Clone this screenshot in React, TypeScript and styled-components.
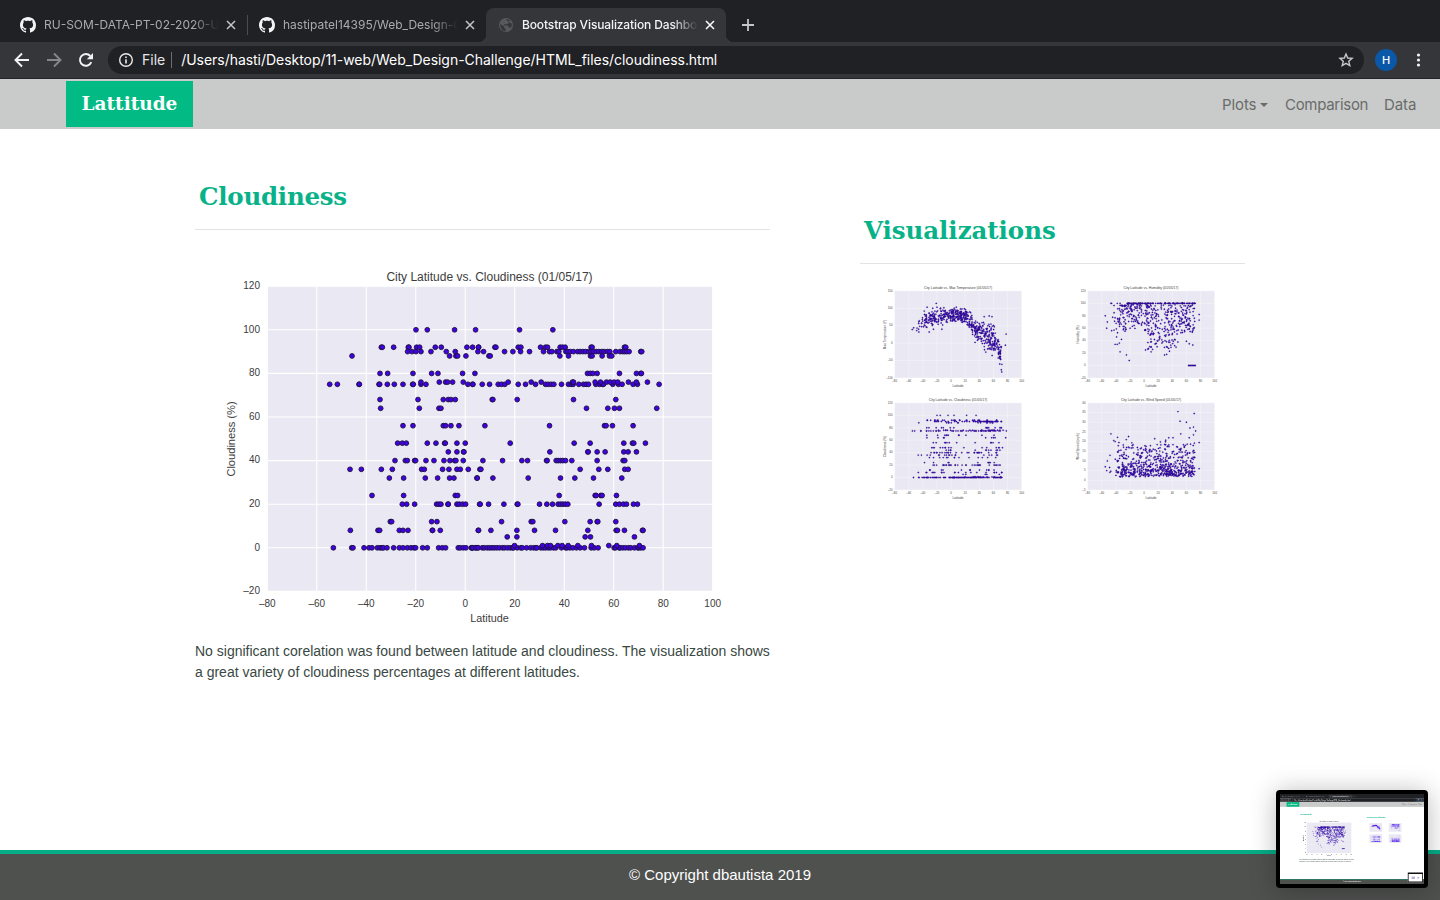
import React from "react";
import styled, { createGlobalStyle } from "styled-components";

const Global = createGlobalStyle`
  * { box-sizing: border-box; }
  html, body { margin: 0; padding: 0; background: #fff; overflow: hidden; }
`;

const UI = `Inter, "Liberation Sans", sans-serif`;
const SANS = `"Liberation Sans", Arial, sans-serif`;
const SERIF = `Georgia, "DejaVu Serif", serif`;

/* ---------- browser frame ---------- */

const Screen = styled.div`
  position: relative;
  display: flex;
  flex-direction: column;
  width: 1440px;
  height: 900px;
  overflow: hidden;
  background: #fff;
`;

const TabStrip = styled.div`
  display: flex;
  align-items: flex-end;
  height: 42px;
  padding-left: 8px;
  background: #202124;
`;

const Tab = styled.div<{ $active?: boolean; $width: number; $divider?: boolean }>`
  position: relative;
  display: flex;
  align-items: center;
  width: ${(p) => p.$width}px;
  height: 34px;
  padding: 0 11px 0 12px;
  border-radius: 8px 8px 0 0;
  background: ${(p) => (p.$active ? "#35363a" : "transparent")};
  color: ${(p) => (p.$active ? "#f1f3f4" : "#a8abb0")};
  font: ${(p) => (p.$active ? 500 : 400)} 12px/16px ${UI};
  ${(p) =>
    p.$divider &&
    `&::after { content: ""; position: absolute; right: -1px; top: 7px; width: 1px; height: 20px; background: #4a4c50; }`}
  ${(p) =>
    p.$active &&
    `&::before, &::after { content: ""; position: absolute; bottom: 0; width: 8px; height: 8px; }
     &::before { left: -8px; background: radial-gradient(circle at 0 0, transparent 8px, #35363a 8.5px); }
     &::after { right: -8px; background: radial-gradient(circle at 100% 0, transparent 8px, #35363a 8.5px); }`}
`;

const TabTitle = styled.span<{ $spacing: number }>`
  flex: 1;
  margin: 0 7px 0 8px;
  overflow: hidden;
  white-space: nowrap;
  letter-spacing: ${(p) => p.$spacing}px;
  mask-image: linear-gradient(to right, #000 calc(100% - 26px), transparent);
`;

const NewTab = styled.div`
  display: flex;
  align-items: center;
  height: 34px;
  margin-left: 15px;
`;

const Toolbar = styled.div`
  display: flex;
  align-items: center;
  height: 37px;
  padding: 0 10px 1px 14px;
  background: #35363a;
  border-bottom: 1px solid #232427;
`;

const NavButtons = styled.div`
  display: flex;
  gap: 16px;
  margin-right: 14px;
`;

const Omnibox = styled.div`
  display: flex;
  align-items: center;
  width: 1256px;
  height: 28px;
  padding: 0 10px;
  border-radius: 14px;
  background: #202124;
  color: #fff;
  font: 400 14px/20px ${UI};
`;

const Scheme = styled.span`
  margin: 0 6px 0 8px;
  color: #e4e6e9;
`;

const SchemeRule = styled.span`
  width: 1px;
  height: 16px;
  margin-right: 9px;
  background: #6b6d71;
`;

const Url = styled.span`
  flex: 1;
  white-space: nowrap;
  letter-spacing: -0.04px;
`;

const Profile = styled.div`
  display: flex;
  align-items: center;
  justify-content: center;
  width: 22px;
  height: 22px;
  margin: 0 13px 0 11px;
  border-radius: 50%;
  background: #0b57a8;
  color: #fff;
  font: 500 11px/22px ${UI};
`;

/* ---------- page ---------- */

const NavBar = styled.nav`
  display: flex;
  align-items: center;
  justify-content: space-between;
  height: 50px;
  padding: 0 24px 0 66px;
  background: #c9cbca;
`;

const Brand = styled.a`
  width: 127px;
  height: 46px;
  background: #02ba83;
  color: #fff;
  font: bold 18.5px/46px ${SERIF};
  text-align: center;
`;

const Menu = styled.div`
  display: flex;
  gap: 16px;
  color: #6a6c6b;
  font: 400 15px/24px ${UI};
`;

const MenuItem = styled.a<{ $width: number }>`
  display: flex;
  align-items: center;
  width: ${(p) => p.$width}px;
  padding-top: 1px;
  white-space: nowrap;
  letter-spacing: ${(p) => (p.$width > 80 ? -0.3 : -0.1)}px;
`;

const Caret = styled.span`
  margin-left: 4px;
  border: 4.8px solid transparent;
  border-top-color: currentColor;
  border-bottom: 0;
`;

const Main = styled.main`
  display: flex;
  flex: 1;
  gap: 90px;
  padding-left: 195px;
`;

const Article = styled.section`
  width: 575px;
  padding-top: 49px;
`;

const Aside = styled.aside`
  width: 385px;
  padding-top: 83px;
`;

const Heading = styled.h2<{ $spacing: number }>`
  height: 52px;
  margin: 0;
  padding-left: 4px;
  border-bottom: 1px solid #e3e3e3;
  color: #08b289;
  font: bold 24.5px/38px ${SERIF};
  letter-spacing: ${(p) => p.$spacing}px;
`;

const MainPlot = styled.div`
  height: 370px;
  margin-top: 32px;
`;

const Body = styled.p`
  margin: 9px 0 0;
  color: #3a4843;
  font: 14px/21px ${SANS};
  white-space: nowrap;
`;

const PlotGrid = styled.div`
  display: grid;
  grid-template-columns: 1fr 1fr;
  grid-auto-rows: 112px;
  justify-items: center;
  margin-top: 20px;
`;

const Footer = styled.footer`
  height: 50px;
  border-top: 4px solid #06ad86;
  background: #4f514f;
  color: #fff;
  font: 15px/42px ${SANS};
  text-align: center;
`;

/* ---------- floating capture preview ---------- */

const Preview = styled.div`
  position: absolute;
  right: 12px;
  bottom: 12px;
  width: 152px;
  height: 98px;
  padding: 4px;
  border-radius: 4px;
  background: #000;
  box-shadow: 0 2px 26px rgba(0, 0, 0, 0.28);
`;

const PreviewWindow = styled.div`
  width: 144px;
  height: 90px;
  overflow: hidden;
`;

const PreviewScale = styled.div`
  width: 1440px;
  height: 900px;
  transform: scale(0.1);
  transform-origin: 0 0;
`;

const Nested = styled.div`
  position: absolute;
  right: 10px;
  bottom: 16px;
  display: flex;
  align-items: center;
  justify-content: center;
  gap: 22px;
  width: 152px;
  height: 98px;
  border: 8px solid #111;
  border-top-width: 14px;
  background: #fff;
`;

const NestedPlot = styled.div<{ $size: number }>`
  width: ${(p) => p.$size}px;
  height: ${(p) => p.$size * 0.7}px;
  background: #b9b2dc;
`;

/* ---------- chart data ---------- */

type Point = [number, number];

const cloudRows: [number, number[], number[]][] = [
  [100, [588, 622, 704, 767], [148, 248]],
  [92, [484, 487, 521, 565, 567, 590, 599, 646, 664, 741, 758, 776], [25, 74, 77, 144, 152, 211, 226, 232, 270, 277, 285, 363, 366, 463, 467]],
  [90, [563, 576, 588, 603, 633, 679, 706, 774], [40, 103, 128, 151, 178, 220, 238, 245, 260, 266, 287, 293, 300, 310, 323, 330, 338, 346, 355, 362, 369, 378, 386, 395, 402, 412, 419, 437, 450, 458, 464, 470, 477, 512, 515]],
  [88, [396, 689, 708, 713, 738], [56, 60, 269, 295, 361, 366, 396, 418, 425]],
  [80, [480, 503, 579, 635, 654, 728, 765], [352, 360, 368, 381, 448, 499, 512, 514]],
  [75, [329, 352, 417, 418, 477, 479, 502, 523, 549, 578, 580, 603, 618, 744, 758], [8, 36, 58, 84, 94, 104, 144, 166, 196, 226, 234, 243, 251, 274, 295, 303, 309, 326, 340, 348, 355, 377, 388, 397, 400, 428, 445, 456, 489, 502, 567]],
  [76, [603, 658, 677, 683, 698, 730], [114, 183, 213, 307, 310, 375, 391, 409, 420, 432, 443, 475, 499, 532]],
  [68, [480, 594, 670, 685, 693, 706], [66, 68, 141, 310, 437]],
  [64, [482, 598, 657, 663], [349, 413, 433, 448, 560]],
  [56, [549, 579, 670, 677, 693, 717], [44, 238, 403, 408, 427, 489]],
  [48, [533, 547, 559, 622, 648, 674, 676, 711, 736], [120, 312, 360, 461, 487, 491, 526]],
  [44, [685, 711, 731, 732], [239, 353, 354, 381, 405, 461, 474, 499]],
  [40, [525, 556, 562, 584, 587, 618, 642, 672, 690, 704, 708, 730], [38, 97, 155, 172, 229, 231, 258, 264, 271, 278, 286, 305, 381, 459, 464]],
  [36, [390, 424, 484, 517, 605, 613, 668, 687, 711, 721, 745, 780], [32, 330, 386, 413, 464, 474]],
  [32, [508, 551, 616, 653, 689, 702, 771], [21, 68, 174, 271, 314, 370, 455]],
  [24, [456, 551, 706, 713], [267, 375, 378, 392, 396, 439]],
  [20, [547, 560, 584, 650, 657, 663, 684, 685, 711, 718, 728, 737, 779], [30, 55, 101, 141, 143, 208, 230, 247, 264, 271, 278, 285, 293, 387, 437, 448, 460, 469, 490, 502]],
  [12, [511, 515, 635, 651], [94, 183, 188, 284, 360, 381, 383, 437]],
  [8, [391, 474, 479, 538, 549, 564, 637, 638, 661, 775], [25, 62, 140, 193, 256, 353, 438, 442, 463, 517, 519]],
  [5, [], [111, 140, 345, 361, 493]],
  [0, [340, 395, 399, 432, 447, 456, 472, 480, 486, 490, 501, 521, 538, 549, 562, 573, 582, 587, 608, 622, 656, 667, 677, 715, 721, 730, 738, 754, 757, 767, 773],
    [5, 8, 17, 24, 36, 42, 51, 58, 65, 72, 80, 88, 97, 103, 112, 120, 127, 130, 141, 152, 156, 169, 181, 190, 197, 200, 212, 219, 226, 234, 241, 250, 257, 274, 287, 290, 299, 308, 319, 330, 343, 363, 372, 384, 432, 436, 447, 450, 458, 466, 475, 482, 493, 503, 506, 512, 519]],
  [1, [], [133, 217, 232, 241, 263, 276, 294, 323, 364, 416, 440, 508]],
];

const toLat = (u: number) => (u - 736) / 7.43;

const cloudPoints: Point[] = cloudRows.flatMap(([v, west, east]) => [
  ...west.map((u): Point => [toLat(u), v]),
  ...east.map((u): Point => [toLat(u + 751), v]),
]);

function makeRandom(seed: number) {
  let s = seed;
  return () => {
    s = (s * 16807) % 2147483647;
    return s / 2147483647;
  };
}

const bell = (r: () => number) => r() + r() + r() - 1.5;

function sampleLat(r: () => number) {
  const k = r();
  if (k < 0.02) return -49 + r() * 12;
  if (k < 0.36) return -38 + r() * 42;
  return 2 + r() * 70;
}

function interpolate(knots: Point[], x: number) {
  for (let i = 1; i < knots.length; i++) {
    const [x0, y0] = knots[i - 1];
    const [x1, y1] = knots[i];
    if (x <= x1) return y0 + ((y1 - y0) * (x - x0)) / (x1 - x0);
  }
  return knots[knots.length - 1][1];
}

const tempCurve: Point[] = [[-56, 38], [-45, 53], [-35, 68], [-20, 76], [0, 80], [14, 80], [24, 70], [34, 46], [50, 21], [60, 10], [66, -8], [72, -42]];

const tempPoints: Point[] = (() => {
  const r = makeRandom(71);
  const pts: Point[] = [[-21, 114], [-34, 103], [-20, 103], [-26, 100], [-38, 92], [54, 78], [58, 76], [-31, 32], [-25, 40], [78, 26], [77, -6], [34, 2], [-55, 39], [-53, 44], [-46, 40], [-35, 46], [-13, 40], [-12, 52], [72, -61]];
  for (let i = 0; i < 560; i++) {
    const x = sampleLat(r);
    pts.push([x, interpolate(tempCurve, x) + bell(r) * (x > 40 ? 38 : x > 25 ? 28 : 20)]);
  }
  return pts;
})();

const humidPoints: Point[] = (() => {
  const r = makeRandom(913);
  const pts: Point[] = [[-55, 80], [-52, 70], [-53, 60], [-34, 22], [-25, 17], [-21, 8], [2, 25], [10, 22], [12, 26], [29, 17], [32, 18], [36, 23], [78, 82], [78, 73], [60, 39], [64, 35], [69, 33], [-46, 100], [-47, 100], [-46, 56], [-38, 100], [-34, 100], [-41, 34], [-38, 34], [-35, 36], [-32, 42], [-39, 46]];
  for (let x = 63; x < 73; x += 1.2) pts.push([x, 0]);
  for (let i = 0; i < 110; i++) pts.push([-24 + r() * 97, 100]);
  for (let i = 0; i < 430; i++) {
    const x = sampleLat(r);
    const spread = x > 5 && x < 48 ? 72 : x > -25 && x <= 5 ? 42 : 46;
    pts.push([x, 98 - Math.pow(r(), x > -25 && x <= 5 ? 1.8 : 1.05) * spread]);
  }
  return pts;
})();

const windPoints: Point[] = (() => {
  const r = makeRandom(4211);
  const pts: Point[] = [[48, 35.5], [71, 34.5], [51, 30.5], [60, 30], [65, 27], [70, 27.5], [73, 25.5], [-47, 24], [-22, 22.6], [-55, 7], [-53, 5], [-52, 10], [-43, 20.5], [-41, 20], [78, 19.5], [78, 6], [15, 21.5], [35, 22], [41, 22], [52, 24], [64, 22], [70, 23.5]];
  for (let i = 0; i < 620; i++) {
    const x = sampleLat(r);
    pts.push([x, 1.8 + Math.abs(bell(r)) * 5 + Math.pow(r(), 3) * 15]);
  }
  return pts;
})();

interface PlotSpec {
  title: string;
  label: string;
  min: number;
  max: number;
  step: number;
  points: Point[];
}

const plots: Record<string, PlotSpec> = {
  temperature: { title: "City Latitude vs. Max Temperature (01/05/17)", label: "Max Temperature (F)", min: -100, max: 150, step: 50, points: tempPoints },
  humidity: { title: "City Latitude vs. Humidity (01/05/17)", label: "Humidity (%)", min: -20, max: 120, step: 20, points: humidPoints },
  cloudiness: { title: "City Latitude vs. Cloudiness (01/05/17)", label: "Cloudiness (%)", min: -20, max: 120, step: 20, points: cloudPoints },
  wind: { title: "City Latitude vs. Wind Speed (01/05/17)", label: "Wind Speed (mph)", min: -5, max: 40, step: 5, points: windPoints },
};

const minus = (n: number) => String(n).replace("-", "–");

/* `bare` leaves out the lettering, for plots only a few pixels wide */
const Scatter = ({ spec, width, bare, radius = 2.4 }: { spec: PlotSpec; width: number; bare?: boolean; radius?: number }) => {
  const left = 72.3, right = 517.7, top = 24.2, bottom = 329.4;
  const sx = (v: number) => left + ((v + 80) / 180) * (right - left);
  const sy = (v: number) => bottom - ((v - spec.min) / (spec.max - spec.min)) * (bottom - top);
  const xs = Array.from({ length: 10 }, (_, i) => -80 + i * 20);
  const ys: number[] = [];
  for (let v = spec.min; v <= spec.max; v += spec.step) ys.push(v);
  return (
    <svg width={width} height={(width * 370) / 575} viewBox="0 0 575 370" style={{ display: "block" }}>
      <rect x={left} y={top} width={right - left} height={bottom - top} fill="#eae8f2" />
      <g stroke="#fff" strokeWidth="1.1">
        {xs.map((v) => <line key={v} x1={sx(v)} x2={sx(v)} y1={top} y2={bottom} />)}
        {ys.map((v) => <line key={v} y1={sy(v)} y2={sy(v)} x1={left} x2={right} />)}
      </g>
      <g fill="#4300e6" stroke="#1a1240" strokeWidth="0.9">
        {spec.points.map(([x, y], i) => <circle key={i} cx={sx(x)} cy={sy(y)} r={radius} />)}
      </g>
      {!bare && (
        <g fontFamily="Liberation Sans, Arial, sans-serif" fill="#3c3c3c" fontSize="10">
          {xs.map((v) => <text key={v} x={sx(v)} y="344.5" textAnchor="middle">{minus(v)}</text>)}
          {ys.map((v) => <text key={v} x="65" y={sy(v) + 2.7} textAnchor="end">{minus(v)}</text>)}
          <text x="294.5" y="18.5" fontSize="12" textAnchor="middle">{spec.title}</text>
          <text x="294.5" y="360" fontSize="10.8" textAnchor="middle">Latitude</text>
          <text transform="translate(40.3 177) rotate(-90)" fontSize="11.1" textAnchor="middle">{spec.label}</text>
        </g>
      )}
    </svg>
  );
};

/* ---------- icons ---------- */

const GitHubIcon = () => (
  <svg width="16" height="16" viewBox="0 0 16 16" fill="#f4f4f4">
    <path d="M8 0C3.58 0 0 3.58 0 8c0 3.54 2.29 6.53 5.47 7.59.4.07.55-.17.55-.38 0-.19-.01-.82-.01-1.49-2.01.37-2.53-.49-2.69-.94-.09-.23-.48-.94-.82-1.13-.28-.15-.68-.52-.01-.53.63-.01 1.08.58 1.23.82.72 1.21 1.87.87 2.33.66.07-.52.28-.87.51-1.07-1.78-.2-3.64-.89-3.64-3.95 0-.87.31-1.59.82-2.15-.08-.2-.36-1.02.08-2.12 0 0 .67-.21 2.2.82.64-.18 1.32-.27 2-.27s1.36.09 2 .27c1.53-1.04 2.2-.82 2.2-.82.44 1.1.16 1.92.08 2.12.51.56.82 1.27.82 2.15 0 3.07-1.87 3.75-3.65 3.95.29.25.54.73.54 1.48 0 1.07-.01 1.93-.01 2.2 0 .21.15.46.55.38A8.01 8.01 0 0 0 16 8c0-4.42-3.58-8-8-8Z" />
  </svg>
);

const GlobeIcon = () => (
  <svg width="16" height="16" viewBox="0 0 16 16">
    <circle cx="8" cy="8" r="7" fill="#56585d" />
    <path d="M2.2 7.2 6 9.2v1.4l1.6 1.2v2.4C4.3 14 2 11.3 2.2 7.2ZM8 2.2c1.5-.2 3 .4 4 1.4l-1.3 1.2v1.4L8.8 7.3H6.2v1.3h3.6l1.2 1.8 1.7.4c1-1.2 1.4-2.7 1-4.2l-1.5-.5" fill="#35363a" />
  </svg>
);

const CloseIcon = ({ color }: { color: string }) => (
  <svg width="10" height="10" viewBox="0 0 10 10" stroke={color} strokeWidth="1.5">
    <path d="M1 1l8 8M9 1L1 9" />
  </svg>
);

const ArrowIcon = ({ color, flip }: { color: string; flip?: boolean }) => (
  <svg width="16" height="16" viewBox="0 0 16 16" fill="none" stroke={color} strokeWidth="1.9">
    <path d={flip ? "M1 8h13M8 1.5 14.5 8 8 14.5" : "M15 8H2M8 1.5 1.5 8 8 14.5"} />
  </svg>
);

const ReloadIcon = () => (
  <svg width="16" height="16" viewBox="0 0 16 16">
    <path d="M13.3 10.2A5.9 5.9 0 1 1 12.3 4" fill="none" stroke="#f1f3f4" strokeWidth="1.9" />
    <path d="M15 1v6.2H8.8Z" fill="#f1f3f4" />
  </svg>
);

const InfoIcon = () => (
  <svg width="16" height="16" viewBox="0 0 16 16">
    <circle cx="8" cy="8" r="6.3" fill="none" stroke="#e8eaed" strokeWidth="1.4" />
    <path d="M7.2 4.5h1.6v1.6H7.2ZM7.2 7.2h1.6v4.2H7.2Z" fill="#e8eaed" />
  </svg>
);

const StarIcon = () => (
  <svg width="16" height="16" viewBox="0 0 16 16" fill="none" stroke="#c6c8cb" strokeWidth="1.4">
    <path d="M8 2 9.7 6.05 14.1 6.4 10.75 9.3 11.8 13.6 8 11.3 4.2 13.6 5.25 9.3 1.9 6.4 6.3 6.05Z" />
  </svg>
);

const DotsIcon = () => (
  <svg width="16" height="16" viewBox="0 0 16 16" fill="#f1f3f4">
    <circle cx="8.5" cy="3" r="1.6" /><circle cx="8.5" cy="8" r="1.6" /><circle cx="8.5" cy="13" r="1.6" />
  </svg>
);

/* ---------- assembled screen ---------- */

interface ScreenProps {
  file: string;
  heading: string;
  plot: string;
  text: string[];
  bare?: boolean;
  children?: React.ReactNode;
}

const BrowserScreen = ({ file, heading, plot, text, bare, children }: ScreenProps) => (
  <Screen>
    <TabStrip>
      <Tab $width={239} $divider>
        <GitHubIcon />
        <TabTitle $spacing={0}>RU-SOM-DATA-PT-02-2020-U-C</TabTitle>
        <CloseIcon color="#c4c6c9" />
      </Tab>
      <Tab $width={239}>
        <GitHubIcon />
        <TabTitle $spacing={0}>hastipatel14395/Web_Design-Challenge</TabTitle>
        <CloseIcon color="#c4c6c9" />
      </Tab>
      <Tab $width={240} $active>
        <GlobeIcon />
        <TabTitle $spacing={-0.13}>Bootstrap Visualization Dashboard</TabTitle>
        <CloseIcon color="#fff" />
      </Tab>
      <NewTab>
        <svg width="14" height="14" viewBox="0 0 14 14" stroke="#c4c6c9" strokeWidth="1.8"><path d="M7 1v12M1 7h12" /></svg>
      </NewTab>
    </TabStrip>
    <Toolbar>
      <NavButtons>
        <ArrowIcon color="#f1f3f4" />
        <ArrowIcon color="#85878b" flip />
        <ReloadIcon />
      </NavButtons>
      <Omnibox>
        <InfoIcon />
        <Scheme>File</Scheme>
        <SchemeRule />
        <Url>/Users/hasti/Desktop/11-web/Web_Design-Challenge/HTML_files/{file}.html</Url>
        <StarIcon />
      </Omnibox>
      <Profile>H</Profile>
      <DotsIcon />
    </Toolbar>
    <NavBar>
      <Brand>Lattitude</Brand>
      <Menu>
        <MenuItem $width={47}>Plots<Caret /></MenuItem>
        <MenuItem $width={83}>Comparison</MenuItem>
        <MenuItem $width={32}>Data</MenuItem>
      </Menu>
    </NavBar>
    <Main>
      <Article>
        <Heading $spacing={-0.25}>{heading}</Heading>
        <MainPlot><Scatter spec={plots[plot]} width={575} radius={bare ? 3.2 : 2.4} /></MainPlot>
        <Body>{text[0]}<br />{text[1]}</Body>
      </Article>
      <Aside>
        <Heading $spacing={-0.05}>Visualizations</Heading>
        <PlotGrid>
          {["temperature", "humidity", "cloudiness", "wind"].map((name) => (
            <Scatter key={name} spec={plots[name]} width={164} bare={bare} radius={bare ? 4.5 : 2.4} />
          ))}
        </PlotGrid>
      </Aside>
    </Main>
    <Footer>© Copyright dbautista 2019</Footer>
    {children}
  </Screen>
);

const App = () => (
  <>
    <Global />
    <BrowserScreen
      file="cloudiness"
      heading="Cloudiness"
      plot="cloudiness"
      text={[
        "No significant corelation was found between latitude and cloudiness. The visualization shows",
        "a great variety of cloudiness percentages at different latitudes.",
      ]}
    >
      <Preview>
        <PreviewWindow>
          <PreviewScale>
            <BrowserScreen
              file="humidity"
              heading="Humidity"
              plot="humidity"
              bare
              text={[
                "Even though the correlation between latitude and humidity is weak, the majority of cities",
                "had above 60% humidity, with the lowest values found between 20 and 40 degrees.",
              ]}
            >
              <Nested>
                <NestedPlot $size={34} />
                <NestedPlot $size={20} />
              </Nested>
            </BrowserScreen>
          </PreviewScale>
        </PreviewWindow>
      </Preview>
    </BrowserScreen>
  </>
);

export default App;
